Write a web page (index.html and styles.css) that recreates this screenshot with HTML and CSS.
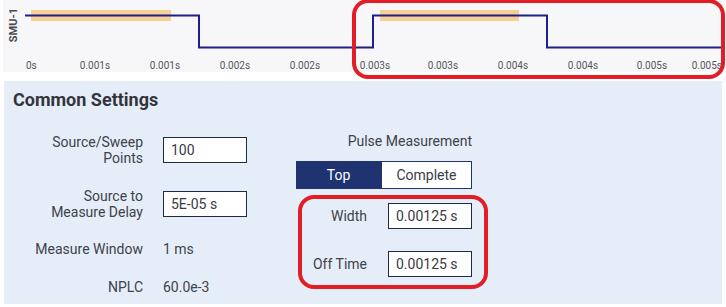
FILE: index.html
```html
<!DOCTYPE html>
<html>
<head>
<meta charset="utf-8">
<link rel="stylesheet" href="styles.css">
</head>
<body>
<div class="page">
  <div class="chart">
    <svg class="chart-svg" width="719" height="73" viewBox="0 0 719 73">
      <text class="axis-title" transform="translate(14,25) rotate(-90)" text-anchor="middle">SMU-1</text>
      <rect class="band" x="28" y="10" width="140" height="11"/>
      <rect class="band" x="377" y="10" width="139" height="11"/>
      <polyline class="trace" points="22,15.5 196,15.5 196,47.5 370,47.5 370,15.5 544,15.5 544,47.5 719,47.5"/>
      <g class="ticks">
        <text x="23" y="69">0s</text>
        <text x="92" y="69" text-anchor="middle">0.001s</text>
        <text x="162" y="69" text-anchor="middle">0.001s</text>
        <text x="232" y="69" text-anchor="middle">0.002s</text>
        <text x="302" y="69" text-anchor="middle">0.002s</text>
        <text x="372" y="69" text-anchor="middle">0.003s</text>
        <text x="440" y="69" text-anchor="middle">0.003s</text>
        <text x="510" y="69" text-anchor="middle">0.004s</text>
        <text x="580" y="69" text-anchor="middle">0.004s</text>
        <text x="649" y="69" text-anchor="middle">0.005s</text>
        <text x="719" y="69" text-anchor="end">0.005s</text>
      </g>
    </svg>
  </div>

  <section class="panel">
    <h2 class="panel-title">Common Settings</h2>
    <div class="cols">
      <div class="settings">
        <div class="label">Source/Sweep<br>Points</div>
        <div class="input">100</div>
        <div class="label">Source to<br>Measure Delay</div>
        <div class="input">5E-05 s</div>
        <div class="label">Measure Window</div>
        <div class="value">1 ms</div>
        <div class="label">NPLC</div>
        <div class="value">60.0e-3</div>
      </div>
      <div class="pulse">
        <div class="pulse-title">Pulse Measurement</div>
        <div class="segmented">
          <div class="seg seg-active">Top</div>
          <div class="seg">Complete</div>
        </div>
        <div class="pulse-row pulse-row-first">
          <div class="label">Width</div>
          <div class="input">0.00125 s</div>
        </div>
        <div class="pulse-row pulse-row-second">
          <div class="label">Off Time</div>
          <div class="input">0.00125 s</div>
        </div>
      </div>
    </div>
  </section>

  <div class="mark mark-chart"></div>
  <div class="mark mark-pulse"></div>
</div>
</body>
</html>
```

FILE: styles.css
```css
* { box-sizing: border-box; }
html, body { margin: 0; padding: 0; background: #ffffff; }
body {
  font-family: Roboto, "Liberation Sans", sans-serif;
  color: #40414a;
  width: 726px;
  height: 307px;
  overflow: hidden;
}
.page { position: relative; width: 726px; height: 307px; }

.chart {
  margin-left: 3px;
  width: 719px;
  height: 72px;
  background: #f7f7f9;
}
.chart-svg { display: block; }
.axis-title { font: bold 11px Roboto, "Liberation Sans", sans-serif; fill: #4a4a52; }
.band { fill: #f5cb86; opacity: 0.9; }
.trace { fill: none; stroke: #1f1f8c; stroke-width: 2; }
.ticks text { font: 10px Roboto, "Liberation Sans", sans-serif; fill: #55565e; }

.panel {
  margin: 9px 0 0 4px;
  width: 718px;
  height: 223px;
  background: #e5eef8;
  padding: 9px 0 0 9px;
}
.panel-title {
  margin: 0;
  font-size: 18px;
  line-height: 20px;
  font-weight: bold;
  color: #33343c;
}
.cols {
  display: flex;
  align-items: flex-start;
  gap: 49px;
  margin-top: 21px;
}
.settings {
  display: grid;
  grid-template-columns: 130px 84px;
  grid-template-rows: 38px 38px 20px 24px;
  column-gap: 20px;
  row-gap: 16px;
  align-items: center;
}
.label {
  text-align: right;
  font-size: 14px;
  line-height: 16px;
  color: #40414a;
}
.value { font-size: 14px; line-height: 16px; color: #40414a; }
.input {
  height: 26px;
  width: 84px;
  background: #ffffff;
  border: 1px solid #1f2a44;
  font-size: 14px;
  line-height: 24px;
  padding-left: 7px;
  color: #3a3b44;
}

.pulse { width: 176px; display: flex; flex-direction: column; }
.pulse-title {
  text-align: right;
  font-size: 14px;
  line-height: 20px;
  color: #40414a;
}
.segmented {
  display: flex;
  margin-top: 10px;
  height: 28px;
}
.seg {
  flex: 0 0 91px;
  border: 1px solid #1e3370;
  background: #ffffff;
  text-align: center;
  font-size: 14px;
  line-height: 26px;
  color: #3a3b44;
}
.seg-active {
  flex: 0 0 85px;
  background: #1e3370;
  color: #ffffff;
}
.pulse-row {
  display: grid;
  grid-template-columns: 71px 84px;
  column-gap: 21px;
  align-items: center;
  height: 26px;
}
.pulse-row-first { margin-top: 14px; }
.pulse-row-second { margin-top: 22px; }

.mark {
  position: absolute;
  border: 4px solid #e31d26;
  border-radius: 16px;
  pointer-events: none;
}
.mark-chart { left: 352px; top: -1px; width: 373px; height: 80px; }
.mark-pulse { left: 298px; top: 195px; width: 190px; height: 94px; }
```
